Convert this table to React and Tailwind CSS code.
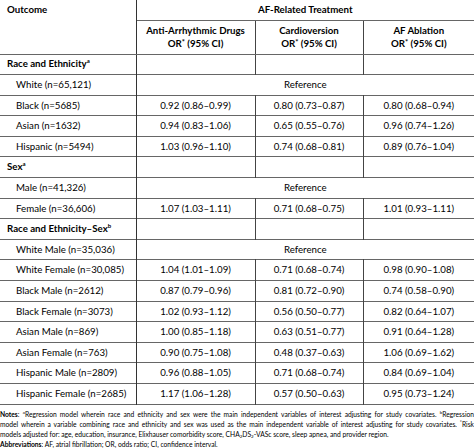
import React from "react";

const rows = [
  { type: "cat", label: "Race and Ethnicity", sup: "a" },
  { type: "ref", label: "White (n=65,121)" },
  { type: "data", label: "Black (n=5685)", v: ["0.92 (0.86–0.99)", "0.80 (0.73–0.87)", "0.80 (0.68–0.94)"] },
  { type: "data", label: "Asian (n=1632)", v: ["0.94 (0.83–1.06)", "0.65 (0.55–0.76)", "0.96 (0.74–1.26)"] },
  { type: "data", label: "Hispanic (n=5494)", v: ["1.03 (0.96–1.10)", "0.74 (0.68–0.81)", "0.89 (0.76–1.04)"] },
  { type: "cat", label: "Sex", sup: "a" },
  { type: "ref", label: "Male (n=41,326)" },
  { type: "data", label: "Female (n=36,606)", v: ["1.07 (1.03–1.11)", "0.71 (0.68–0.75)", "1.01 (0.93–1.11)"] },
  { type: "cat", label: "Race and Ethnicity–Sex", sup: "b" },
  { type: "ref", label: "White Male (n=35,036)" },
  { type: "data", label: "White Female (n=30,085)", v: ["1.04 (1.01–1.09)", "0.71 (0.68–0.74)", "0.98 (0.90–1.08)"] },
  { type: "data", label: "Black Male (n=2612)", v: ["0.87 (0.79–0.96)", "0.81 (0.72–0.90)", "0.74 (0.58–0.90)"] },
  { type: "data", label: "Black Female (n=3073)", v: ["1.02 (0.93–1.12)", "0.56 (0.50–0.77)", "0.82 (0.64–1.07)"] },
  { type: "data", label: "Asian Male (n=869)", v: ["1.00 (0.85–1.18)", "0.63 (0.51–0.77)", "0.91 (0.64–1.28)"] },
  { type: "data", label: "Asian Female (n=763)", v: ["0.90 (0.75–1.08)", "0.48 (0.37–0.63)", "1.06 (0.69–1.62)"] },
  { type: "data", label: "Hispanic Male (n=2809)", v: ["0.96 (0.88–1.05)", "0.71 (0.68–0.74)", "0.84 (0.69–1.04)"] },
  { type: "data", label: "Hispanic Female (n=2685)", v: ["1.17 (1.06–1.28)", "0.57 (0.50–0.63)", "0.95 (0.73–1.24)"] },
];

const font = { fontFamily: "Lato, 'Open Sans', sans-serif" };

function Star() {
  return <sup className="text-[7.5px] relative -top-[2px]">*</sup>;
}

export default function App() {
  return (
    <div className="w-[474px] h-[448px] bg-white text-black overflow-hidden" style={font}>
      <table className="w-[474px] border-collapse table-fixed text-[9.7px] leading-none">
        <colgroup>
          <col className="w-[136px]" />
          <col className="w-[119px]" />
          <col className="w-[108px]" />
          <col className="w-[111px]" />
        </colgroup>
        <thead>
          <tr className="h-[20px]">
            <th rowSpan={2} className="align-top text-left font-bold pl-[7px] pt-[5px] border-r border-r-[#333] border-b border-b-[#666]">
              Outcome
            </th>
            <th colSpan={3} className="font-bold text-center border-b border-b-[#666]">
              AF-Related Treatment
            </th>
          </tr>
          <tr className="h-[34px]">
            <th className="font-bold text-center border-r border-r-[#444] border-b border-b-[#666] leading-[13px]">
              Anti-Arrhythmic Drugs
              <br />
              OR<Star /> (95% CI)
            </th>
            <th className="font-bold text-center border-r border-r-[#444] border-b border-b-[#666] leading-[13px]">
              Cardioversion
              <br />
              OR<Star /> (95% CI)
            </th>
            <th className="font-bold text-center border-b border-b-[#666] leading-[13px]">
              AF Ablation
              <br />
              OR<Star /> (95% CI)
            </th>
          </tr>
        </thead>
        <tbody>
          {rows.map((r, i) => (
            <tr key={i} className="h-[20.6px] border-b border-b-[#666]">
              {r.type === "cat" ? (
                <>
                  <td className="pl-[7px] font-bold border-r border-r-[#333]">
                    {r.label}
                    <sup className="text-[6px] relative -top-[4px]">{r.sup}</sup>
                  </td>
                  <td className="border-r border-r-[#444]"></td>
                  <td className="border-r border-r-[#444]"></td>
                  <td></td>
                </>
              ) : r.type === "ref" ? (
                <>
                  <td className="pl-[16px] border-r border-r-[#333]">{r.label}</td>
                  <td colSpan={3} className="text-center">Reference</td>
                </>
              ) : (
                <>
                  <td className="pl-[16px] border-r border-r-[#333]">{r.label}</td>
                  <td className="text-center border-r border-r-[#444]">{r.v[0]}</td>
                  <td className="text-center border-r border-r-[#444]">{r.v[1]}</td>
                  <td className="text-center">{r.v[2]}</td>
                </>
              )}
            </tr>
          ))}
        </tbody>
      </table>
      <div className="text-[6.7px] leading-[10px] mt-[4px] whitespace-nowrap text-black">
        <div className="text-justify [text-align-last:justify]">
          <b>Notes</b>: <sup className="text-[4.5px]">a</sup>Regression model wherein race and ethnicity and sex were the main independent variables of interest adjusting for study covariates. <sup className="text-[4.5px]">b</sup>Regression
        </div>
        <div className="text-justify [text-align-last:justify]">
          model wherein a variable combining race and ethnicity and sex was used as the main independent variable of interest adjusting for study covariates. <sup className="text-[5px]">*</sup>Risk
        </div>
        <div>
          models adjusted for: age, education, insurance, Elixhauser comorbidity score, CHA<sub className="text-[4.5px]">2</sub>DS<sub className="text-[4.5px]">2</sub>-VASc score, sleep apnea, and provider region.
        </div>
        <div>
          <b>Abbreviations</b>: AF, atrial fibrillation; OR, odds ratio; CI, confidence interval.
        </div>
      </div>
    </div>
  );
}
